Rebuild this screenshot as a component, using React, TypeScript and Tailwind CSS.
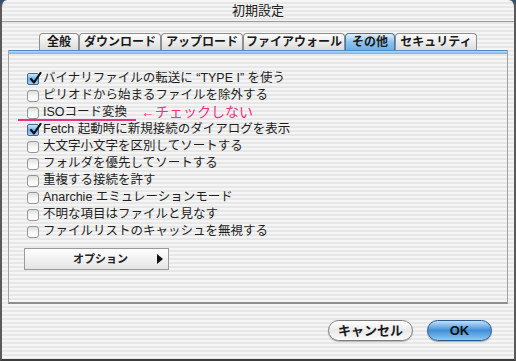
import React from "react";

const font = "font-['Liberation_Sans','Noto_Sans_CJK_JP',sans-serif]";

const tabs = [
  { label: "全般", w: "w-[40px]" },
  { label: "ダウンロード", w: "w-[82px]" },
  { label: "アップロード", w: "w-[82px]" },
  { label: "ファイアウォール", w: "w-[102px]" },
  { label: "その他", w: "w-[50px]", active: true },
  { label: "セキュリティ", w: "w-[82px]" },
];

const options = [
  { label: "バイナリファイルの転送に “TYPE I” を使う", checked: true },
  { label: "ピリオドから始まるファイルを除外する" },
  { label: "ISOコード変換", note: true },
  { label: "Fetch 起動時に新規接続のダイアログを表示", checked: true },
  { label: "大文字小文字を区別してソートする" },
  { label: "フォルダを優先してソートする" },
  { label: "重複する接続を許す" },
  { label: "Anarchie エミュレーションモード" },
  { label: "不明な項目はファイルと見なす" },
  { label: "ファイルリストのキャッシュを無視する" },
];

const Checkbox = ({ checked }: { checked?: boolean }) =>
  checked ? (
    <span className="relative flex h-[12px] w-[12px] shrink-0 items-center justify-center rounded-[2px] border border-[#3d6a9a] bg-gradient-to-b from-[#cfe6fa] via-[#6fb1ea] to-[#9fd0f7]">
      <svg width="13" height="13" viewBox="0 0 13 13" className="absolute -top-[2px] left-[1px]">
        <path d="M2 7 L5 10.5 L11.5 1" fill="none" stroke="#111" strokeWidth="2.2" strokeLinecap="round" strokeLinejoin="round" />
      </svg>
    </span>
  ) : (
    <span className="h-[12px] w-[12px] shrink-0 rounded-[3px] border border-[#959595] bg-gradient-to-b from-[#dedede] via-[#f6f6f6] to-[#ffffff]" />
  );

export default function App() {
  return (
    <div className={`h-[361px] w-[516px] overflow-hidden bg-[#34506c] ${font}`}>
      <div className="flex h-[361px] w-[516px] flex-col rounded-t-[7px] border-x-2 border-b-2 border-x-[#5a5a5a] border-b-[#3c3c3c] bg-[image:repeating-linear-gradient(to_bottom,#f5f5f5_0_2px,#e7e7e7_2px_4px)]">
        <div className="flex h-[22px] shrink-0 items-center justify-center border-b border-[#9a9a9a] text-[13px] text-[#222]">
          初期設定
        </div>

        <div className="ml-[37px] mt-[11px] flex h-[17px] shrink-0">
          {tabs.map((t) => (
            <div
              key={t.label}
              className={`${t.w} flex items-center justify-center rounded-t-[4px] border border-b-0 text-[12px] font-bold text-[#1a1a1a] ${
                t.active
                  ? "border-[#4778ab] bg-gradient-to-b from-[#e2f1fd] via-[#8cc3ef] to-[#6eaee6]"
                  : "border-[#8e8e8e] bg-gradient-to-b from-[#fdfdfd] to-[#dcdcdc]"
              }`}
            >
              {t.label}
            </div>
          ))}
        </div>

        <div className="mx-[6px] flex h-[254px] shrink-0 flex-col border-x border-b-2 border-x-[#a3a3a3] border-b-[#8e8e8e]">
          <div className="h-[4px] shrink-0 border-t border-[#4f8bc4] bg-gradient-to-b from-[#b6dbf8] to-[#74b2e7]" />
          <div className="flex flex-col pl-[18px] pt-[16px]">
            {options.map((o) => (
              <div key={o.label} className="relative flex h-[17px] items-center gap-[4px] text-[12.5px] text-[#1e1e1e]">
                <Checkbox checked={o.checked} />
                <span className="whitespace-nowrap">{o.label}</span>
                {o.note && (
                  <>
                    <span className="ml-[10px] whitespace-nowrap text-[14px] text-[#ee2f82]">←チェックしない</span>
                    <span className="absolute -left-[9px] top-[15px] h-[2px] w-[118px] bg-[#ee2f82]" />
                  </>
                )}
              </div>
            ))}
            <div className="ml-[-3px] mt-[8px] flex h-[22px] w-[145px] items-center justify-between border border-[#9a9a9a] bg-gradient-to-b from-[#ffffff] to-[#e4e4e4] pl-[48px] pr-[5px]">
              <span className="text-[11px] font-bold text-[#222]">オプション</span>
              <svg width="6" height="10" viewBox="0 0 6 10">
                <path d="M0 0 L6 5 L0 10 Z" fill="#111" />
              </svg>
            </div>
          </div>
        </div>

        <div className="mr-[22px] mt-[16px] flex justify-end gap-[14px]">
          <div className="flex h-[21px] w-[85px] items-center justify-center rounded-full border border-[#7d7d7d] bg-gradient-to-b from-[#ffffff] via-[#e9e9e9] to-[#fafafa] text-[13px] font-bold text-[#1a1a1a] shadow-[0_1px_1px_rgba(0,0,0,0.25)]">
            キャンセル
          </div>
          <div className="flex h-[21px] w-[65px] items-center justify-center rounded-full border border-[#2b5a8e] bg-gradient-to-b from-[#bfe0fa] via-[#3f8fd6] to-[#8dc9f5] text-[13px] font-bold text-[#111] shadow-[0_1px_1px_rgba(0,0,0,0.3)]">
            OK
          </div>
        </div>
      </div>
    </div>
  );
}
